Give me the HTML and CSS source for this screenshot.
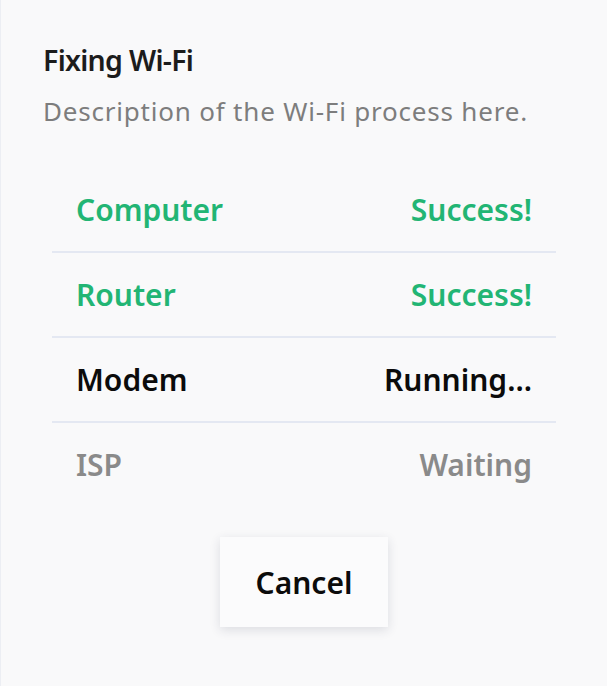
FILE: index.html
```html
<!DOCTYPE html>
<html lang="en">
<head>
<meta charset="utf-8">
<title>Fixing Wi-Fi</title>
<link rel="stylesheet" href="styles.css">
</head>
<body>
<div class="dialog">
  <h1 class="title">Fixing Wi-Fi</h1>
  <p class="desc">Description of the Wi-Fi process here.</p>
  <ul class="steps">
    <li class="step success"><span>Computer</span><span>Success!</span></li>
    <li class="step success"><span>Router</span><span>Success!</span></li>
    <li class="step running"><span>Modem</span><span>Running...</span></li>
    <li class="step waiting"><span>ISP</span><span>Waiting</span></li>
  </ul>
  <div class="actions">
    <button class="btn">Cancel</button>
  </div>
</div>
</body>
</html>
```
FILE: styles.css
```css
html, body {
  margin: 0;
  padding: 0;
  background: #f9f9fa;
}
body {
  font-family: "Noto Sans", "Open Sans", sans-serif;
  width: 607px;
  height: 686px;
  overflow: hidden;
}
.dialog {
  box-sizing: border-box;
  height: 686px;
  border-left: 1px solid #eceef3;
  padding: 38px 51px 0 42px;
}
.title {
  margin: 0;
  font-size: 28.5px;
  font-weight: 600;
  letter-spacing: -0.7px;
  line-height: 44px;
  color: #1c1c1c;
}
.desc {
  margin: 11px 0 0;
  font-size: 26px;
  font-weight: 400;
  letter-spacing: 0.8px;
  line-height: 36px;
  color: #7d7d7d;
}
.steps {
  list-style: none;
  margin: 39px 0 0 9px;
  padding: 0;
}
.step {
  display: flex;
  justify-content: space-between;
  align-items: center;
  height: 83px;
  padding: 0 24px;
  font-size: 30px;
  font-weight: 600;
  border-bottom: 2px solid #e4e8f2;
}
.step:last-child {
  border-bottom: none;
}
.success { color: #22b574; }
.running { color: #0b0b0b; }
.waiting { color: #8a8a8a; }
.actions {
  display: flex;
  justify-content: center;
  margin: 31px 0 0 9px;
}
.btn {
  width: 168px;
  height: 90px;
  border: none;
  background: #fbfbfc;
  box-shadow: 0 3px 10px rgba(40, 50, 80, 0.14);
  font-family: inherit;
  font-size: 30px;
  font-weight: 600;
  color: #0b0b0b;
  cursor: pointer;
}
```
